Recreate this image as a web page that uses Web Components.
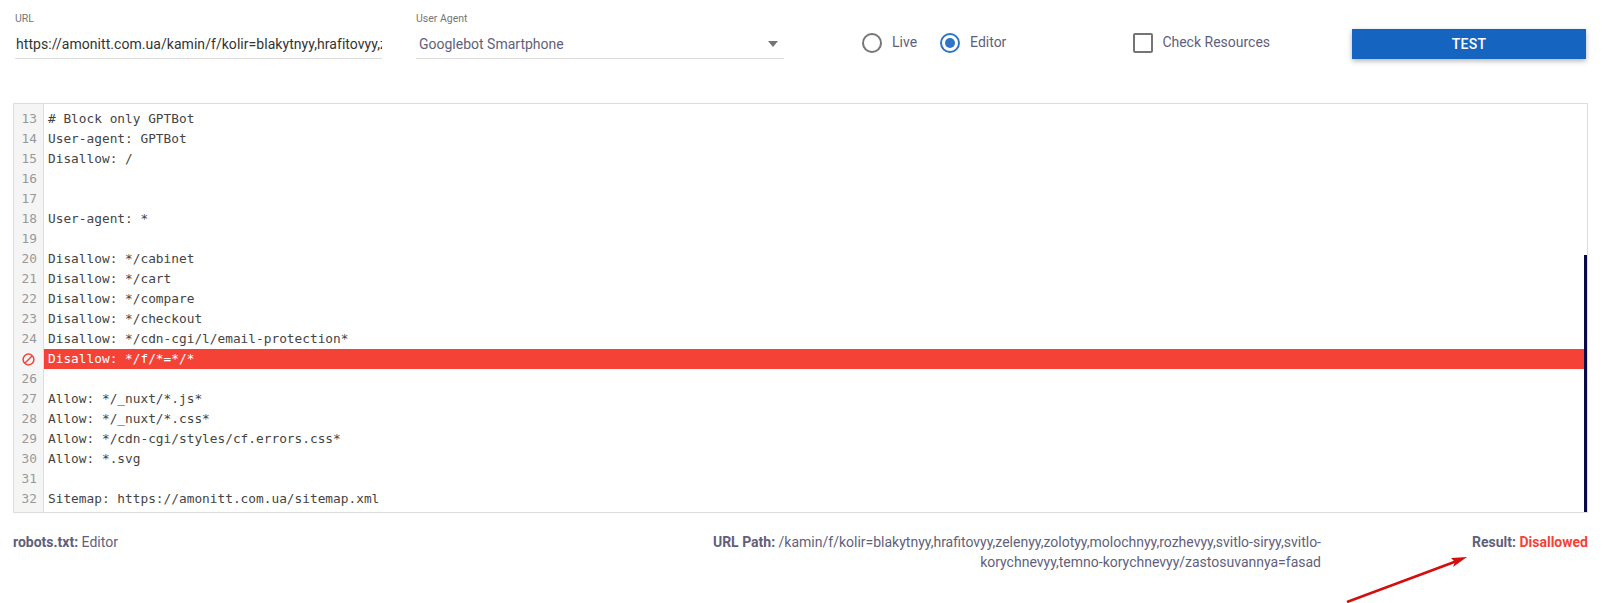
<!DOCTYPE html>
<html>
<head>
<meta charset="utf-8">
<title>robots.txt tester</title>
<style>
html, body { margin: 0; background: #fff; }
body { font-family: Roboto, "Liberation Sans", sans-serif; color: #5f5f7c; }
</style>
</head>
<body>
<tester-page></tester-page>

<script>
class FieldBox extends HTMLElement {
    constructor() {
        super();
        this.attachShadow({ mode: "open" });
        this.shadowRoot.innerHTML = `
<style>
:host { display: block; box-sizing: border-box; height: 47px; border-bottom: 1px solid #ddd; position: relative; }
#label { font-size: 10.5px; line-height: 14px; color: #777; }
#value { display: flex; align-items: center; justify-content: space-between; margin-top: 5px; height: 26px; font-size: 14px; overflow: hidden; white-space: nowrap; }
</style>
<div id="label"></div>
<div id="value"><slot></slot></div>`;
    }
    connectedCallback() {
        this.shadowRoot.getElementById("label").textContent = this.getAttribute("label");
    }
}
customElements.define("field-box", FieldBox);

class RadioOption extends HTMLElement {
    constructor() {
        super();
        this.attachShadow({ mode: "open" });
        this.shadowRoot.innerHTML = `
<style>
:host { display: inline-flex; align-items: center; gap: 10px; font-size: 14px; height: 20px; }
#ring { box-sizing: border-box; width: 20px; height: 20px; border-radius: 50%; border: 2px solid #757575; display: flex; align-items: center; justify-content: center; }
:host([checked]) #ring { border-color: #2f74c8; }
:host([checked]) #ring::after { content: ""; width: 10px; height: 10px; border-radius: 50%; background: #2f74c8; }
#txt { margin-top: -2px; }
</style>
<span id="ring"></span><span id="txt"><slot></slot></span>`;
    }
}
customElements.define("radio-option", RadioOption);

class CheckOption extends HTMLElement {
    constructor() {
        super();
        this.attachShadow({ mode: "open" });
        this.shadowRoot.innerHTML = `
<style>
:host { display: inline-flex; align-items: center; gap: 9px; font-size: 14px; height: 20px; }
#box { box-sizing: border-box; width: 20px; height: 20px; border-radius: 2px; border: 2px solid #757575; }
#txt { margin-top: -2px; }
</style>
<span id="box"></span><span id="txt"><slot></slot></span>`;
    }
}
customElements.define("check-option", CheckOption);

class TestButton extends HTMLElement {
    constructor() {
        super();
        this.attachShadow({ mode: "open" });
        this.shadowRoot.innerHTML = `
<style>
:host { display: flex; align-items: center; justify-content: center; width: 234px; height: 30px; background: #1565c0; color: #fff; font-size: 14px; font-weight: 500; letter-spacing: .3px; box-shadow: 0 2px 5px rgba(0,0,0,.3); }
</style>
<slot></slot>`;
    }
}
customElements.define("test-button", TestButton);

class ToolBar extends HTMLElement {
    constructor() {
        super();
        this.attachShadow({ mode: "open" });
        this.shadowRoot.innerHTML = `
<style>
:host { display: flex; align-items: flex-start; box-sizing: border-box; height: 103px; padding: 12px 19px 0 15px; }
#url { width: 367px; color: #333; }
#ua { width: 368px; margin-left: 34px; }
#arrow { width: 0; height: 0; border-left: 5px solid transparent; border-right: 5px solid transparent; border-top: 6px solid #757575; margin-right: 6px; }
#radios { display: flex; gap: 23px; margin: 21px 0 0 78px; }
#check { margin: 21px 0 0 127px; }
test-button { margin: 17px 0 0 auto; }
#clip { overflow: hidden; width: 100%; padding-left: 1px; letter-spacing: .05px; }
#agent { padding-left: 3px; }
</style>
<field-box id="url" label="URL"><div id="clip">https://amonitt.com.ua/kamin/f/kolir=blakytnyy,hrafitovyy,z</div></field-box>
<field-box id="ua" label="User Agent"><span id="agent">Googlebot Smartphone</span><span id="arrow"></span></field-box>
<div id="radios"><radio-option>Live</radio-option><radio-option checked>Editor</radio-option></div>
<check-option id="check">Check Resources</check-option>
<test-button>TEST</test-button>`;
    }
}
customElements.define("tool-bar", ToolBar);

class EditorLine extends HTMLElement {
    constructor() {
        super();
        this.attachShadow({ mode: "open" });
        this.shadowRoot.innerHTML = `
<style>
:host { display: flex; height: 20px; line-height: 20px; }
#num { box-sizing: border-box; flex: none; width: 30px; padding-right: 6px; text-align: right; color: #999; background: #f5f5f5; border-right: 1px solid #ddd; display: flex; align-items: center; justify-content: flex-end; }
#code { flex: 1; padding-left: 4px; white-space: pre; color: #444; }
:host([blocked]) #code { background: #f44336; color: #fff; }
svg { display: block; margin-right: 2px; }
</style>
<div id="num"></div><div id="code"><slot></slot></div>`;
    }
    connectedCallback() {
        let num = this.shadowRoot.getElementById("num");
        if (this.hasAttribute("blocked")) {
            num.innerHTML = `<svg width="13" height="13" viewBox="0 0 13 13" fill="none" stroke="#f44336" stroke-width="1.5"><circle cx="6.5" cy="6.5" r="5.4"/><path d="M3 10 10 3"/></svg>`;
        } else {
            num.textContent = this.getAttribute("n");
        }
    }
}
customElements.define("editor-line", EditorLine);

class RobotsEditor extends HTMLElement {
    constructor() {
        super();
        this.attachShadow({ mode: "open" });
        this.shadowRoot.innerHTML = `
<style>
:host { display: block; box-sizing: border-box; position: relative; width: 1575px; height: 410px; margin-left: 13px; border: 1px solid #ddd; background: linear-gradient(#f5f5f5,#f5f5f5) left top / 29px 100% no-repeat; font-family: "DejaVu Sans Mono", "Liberation Mono", monospace; font-size: 12.8px; }
#lines { padding-top: 5px; }
#bar { position: absolute; right: 0; bottom: 0; top: 151px; width: 3px; background: #0a0a4a; }
#pad { position: absolute; left: 29px; top: 0; height: 5px; width: 1px; background: #ddd; }
#pad2 { position: absolute; left: 29px; bottom: 0; height: 3px; width: 1px; background: #ddd; }
</style>
<div id="pad"></div><div id="lines"></div><div id="pad2"></div><div id="bar"></div>`;
        this.lines = [
            "# Block only GPTBot",
            "User-agent: GPTBot",
            "Disallow: /",
            "",
            "",
            "User-agent: *",
            "",
            "Disallow: */cabinet",
            "Disallow: */cart",
            "Disallow: */compare",
            "Disallow: */checkout",
            "Disallow: */cdn-cgi/l/email-protection*",
            "Disallow: */f/*=*/*",
            "",
            "Allow: */_nuxt/*.js*",
            "Allow: */_nuxt/*.css*",
            "Allow: */cdn-cgi/styles/cf.errors.css*",
            "Allow: *.svg",
            "",
            "Sitemap: https://amonitt.com.ua/sitemap.xml"
        ];
    }
    connectedCallback() {
        let box = this.shadowRoot.getElementById("lines");
        this.lines.forEach((text, i) => {
            let line = document.createElement("editor-line");
            line.setAttribute("n", 13 + i);
            if (13 + i == 25) line.setAttribute("blocked", "");
            line.textContent = text;
            box.appendChild(line);
        });
    }
}
customElements.define("robots-editor", RobotsEditor);

class ResultBar extends HTMLElement {
    constructor() {
        super();
        this.attachShadow({ mode: "open" });
        this.shadowRoot.innerHTML = `
<style>
:host { display: grid; grid-template-columns: 1fr 620px 267px; margin: 19px 17px 0 13px; font-size: 14px; line-height: 20px; position: relative; }
b { font-weight: 700; }
#path { text-align: right; }
#res { text-align: right; }
#res span { color: #f44336; font-weight: 700; }
svg { position: absolute; left: 1320px; top: 12px; overflow: visible; }
</style>
<div><b>robots.txt:</b> Editor</div>
<div id="path"><b>URL Path:</b> /kamin/f/kolir=blakytnyy,hrafitovyy,zelenyy,zolotyy,molochnyy,rozhevyy,svitlo-siryy,svitlo-korychnevyy,temno-korychnevyy/zastosuvannya=fasad</div>
<div id="res"><b>Result:</b> <span>Disallowed</span></div>
<svg width="140" height="60" viewBox="0 0 140 60"><path d="M14 58 124 17" stroke="#d40d0d" stroke-width="2.6" fill="none"/><path d="M134 13 118 14 122 18 120 23Z" fill="#d40d0d"/></svg>`;
    }
}
customElements.define("result-bar", ResultBar);

class TesterPage extends HTMLElement {
    constructor() {
        super();
        this.attachShadow({ mode: "open" });
        this.shadowRoot.innerHTML = `
<style>
:host { display: block; width: 1605px; height: 603px; overflow: hidden; }
</style>
<tool-bar></tool-bar>
<robots-editor></robots-editor>
<result-bar></result-bar>`;
    }
}
customElements.define("tester-page", TesterPage);
</script>
</body>
</html>
